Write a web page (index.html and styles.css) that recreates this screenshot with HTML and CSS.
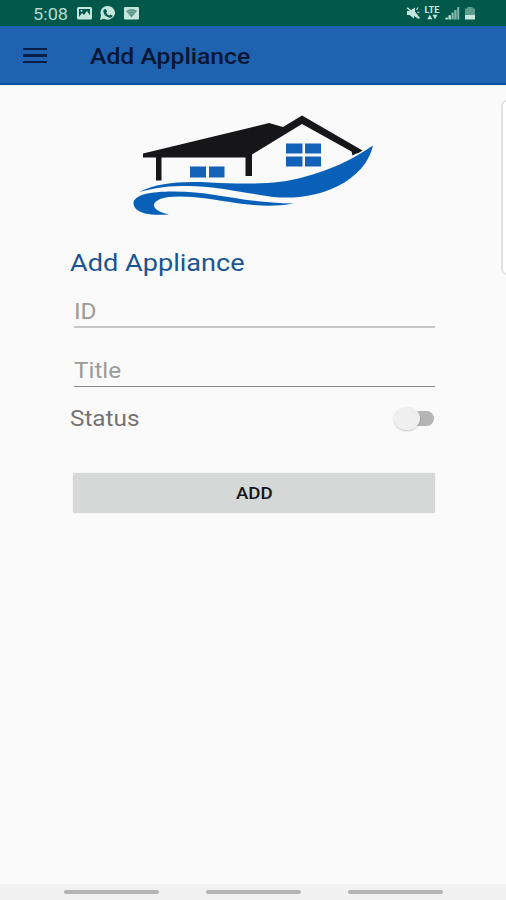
FILE: index.html
```html
<!DOCTYPE html>
<html lang="en">
<head>
    <meta charset="UTF-8">
    <meta name="viewport" content="width=device-width, initial-scale=1.0">
    <title>Add Appliance</title>
    <link rel="stylesheet" href="styles.css">
</head>
<body>
    <div class="status-bar">
        <span class="time wide">5:08</span>
        <svg class="status-left" width="64" height="16" viewBox="76 6 64 16">
            <path fill="#c5e6dd" fill-rule="evenodd" d="M78.500 7h12q1.500 0 1.500 1.500v9.500q0 1.500-1.500 1.500h-12q-1.500 0-1.500-1.500v-9.500q0-1.500 1.500-1.500zM79 9v8.500h11V9z"/>
            <path fill="#c5e6dd" d="M79 17l3-4 2 2 3-4 3.500 5v2H79z"/>
            <circle cx="81.500" cy="10.800" r="1" fill="#c5e6dd"/>
            <path fill="#c5e6dd" d="M100 20l1-4.500a7.300 6.800 0 1 1 3 3.200z"/>
            <path fill="#075b4c" d="M104 9.500l1.800-.4 1.400 2.500-1 1.200q1 2 3 2.700l1.200-1.100 2.300 1.300q-.6 2.500-3.200 2.100-5.500-1.400-6.200-6.200-.1-1.300.7-2.100z"/>
            <rect x="124" y="7" width="15" height="12.500" rx="1" fill="#c5e6dd"/>
            <path fill="#5b9488" d="M126 11q5.500-4 11 0l-5.500 6.500z"/>
            <path fill="none" stroke="#9cc6bb" stroke-width=".6" d="M127.500 12.300q4-2.600 8 0M129.300 14.200q2.200-1.400 4.400 0"/>
        </svg>
        <svg class="status-right" width="72" height="16" viewBox="405 6 72 16">
            <path fill="#c5e6dd" d="M407 11h2.500l5.500-3.500v4l5 6.500-1.300 1-4.700-3v2.500L409.500 15H407zM406.500 8.200l1.200-1 5 4.300-1 1z"/>
            <path fill="none" stroke="#c5e6dd" stroke-width="1.200" d="M416.500 10l1.500-2.500M417.500 12.500l2-.5"/>
            <text class="lte" x="424.500" y="13" textLength="15" lengthAdjust="spacingAndGlyphs">LTE</text>
            <path fill="#c5e6dd" d="M427.300 19.200l2.500-4.500 2.500 4.500zM432.500 14.700h5l-2.500 4.500z"/>
            <path fill="#c5e6dd" d="M445.500 19.500v-2h2.300v2zM448.500 19.500v-4.300h2.300v4.300z"/>
            <path fill="#82b5a7" d="M451.500 19.500v-7h2.300v7zM454.300 19.500v-9.500h2.300v9.500zM457.200 19.500V7h2v12.500z"/>
            <path fill="#609c8d" d="M465 8.500h2.500V7h5v1.500h2.500V16h-10z"/>
            <path fill="#c5e6dd" d="M465 15h10v4.500h-10z"/>
        </svg>
    </div>

    <div class="app-bar">
        <div class="menu">
            <span></span>
            <span></span>
            <span></span>
        </div>
        <h1 class="title wide">Add Appliance</h1>
    </div>

    <div class="content">
        <svg class="logo" width="250" height="110" viewBox="128 110 250 110">
            <!-- roof and posts -->
            <path fill="#161517" d="M143 153.500L269 123l14 4 19-11.500 60.500 35-4 2.500-2 .5-4 2-1-4-49.500-27.500-50 30.500v21.500h-6.500V157.500h-84v23H156V157.500h-13z"/>
            <!-- windows -->
            <path fill="#1262b8" d="M190 166.500h16v11h-16zM209 166.500h15.500v11H209zM286 143.500h16.500v10H286zM305 143.500h16v10h-16zM286 156.500h16.500v10H286zM305 156.500h16v10h-16z"/>
            <!-- waves -->
            <path fill="#0960b8" d="M139 192C158 183 180 181 210 182.500C242 184 277 185 304 177C330 170 350 161 373 145.500C369 163 356 177 338 186C318 196 296 199 273 197C234 191 210 185 182 186C163 186 150 189.500 139 192z"/>
            <path fill="#0960b8" d="M169 214.500C149 216 135 213 133.500 204C133 196 146 192 169 191.500C213 190.500 240 203 294 203.500C273 207 257 206 236 203C211 199 188 195 169 197C151 199 147 210 169 214.500z"/>
        </svg>

        <h2 class="heading"><span class="wide">Add Appliance</span></h2>
        <div class="field"><span class="wide">ID</span></div>
        <div class="field field-title"><span class="wide">Title</span></div>
        <div class="status-row">
            <span class="wide">Status</span>
            <div class="switch"><div class="thumb"></div></div>
        </div>
        <button class="add-btn"><span class="wide">ADD</span></button>
    </div>

    <div class="side-panel"></div>

    <div class="nav-bar">
        <span></span>
        <span></span>
        <span></span>
    </div>
</body>
</html>
```
FILE: styles.css
```css
* {
    margin: 0;
    padding: 0;
    box-sizing: border-box;
}

body {
    display: flex;
    flex-direction: column;
    position: relative;
    height: 900px;
    overflow: hidden;
    font-family: Roboto, sans-serif;
    background-color: #fafafa;
}

/* text is set slightly wider than normal */
.wide {
    display: inline-block;
    transform: scaleX(1.13);
    transform-origin: left center;
    white-space: nowrap;
}

.status-bar {
    display: flex;
    align-items: center;
    height: 26px;
    padding: 1px 29px 0 33px;
    background-color: #00584a;
}

.time {
    width: 43px;
    font-size: 17px;
    line-height: 24px;
    color: #b5dcd2;
    transform: scaleX(1.07);
}

.status-right {
    margin-left: auto;
}

.lte {
    font-size: 9px;
    font-weight: 700;
    fill: #c5e6dd;
}

.app-bar {
    display: flex;
    align-items: center;
    height: 59px;
    padding: 2px 23px 0;
    background-color: #1f62b0;
    border-bottom: 2px solid #08519e;
}

.menu {
    display: flex;
    flex-direction: column;
    gap: 4px;
    width: 24px;
    margin-right: 43px;
}

.menu span {
    height: 2.5px;
    background-color: #091f47;
}

.title {
    padding-top: 2px;
    font-size: 21.5px;
    font-weight: 500;
    color: #061734;
    transform: scaleX(1.15);
}

.content {
    display: flex;
    flex-direction: column;
    flex: 1;
    padding: 25px 71px 0 70px;
}

.logo {
    margin-left: 58px;
}

.heading {
    margin-top: 27px;
    height: 32px;
    font-size: 24px;
    font-weight: 400;
    line-height: 32px;
    color: #1a5593;
}

.field {
    height: 49px;
    margin-left: 4px;
    padding-top: 18px;
    font-size: 21.5px;
    line-height: 30px;
    color: #9b9b9b;
    border-bottom: 2px solid #c6c6c6;
}

.field-title {
    height: 59px;
    padding-top: 28px;
    border-bottom: 1.5px solid #8c8c8c;
}

.status-row {
    display: flex;
    align-items: center;
    justify-content: space-between;
    height: 30px;
    margin-top: 16px;
    font-size: 21.5px;
    color: #737373;
}

.switch {
    display: flex;
    align-items: center;
    width: 36px;
    height: 15px;
    margin-right: 1px;
    border-radius: 8px;
    background-color: #b5b5b5;
}

.thumb {
    flex: none;
    width: 26px;
    height: 23px;
    margin-left: -4px;
    border-radius: 50%;
    background-color: #efefef;
    box-shadow: 0 1px 2px rgba(0, 0, 0, 0.2);
}

.add-btn {
    height: 40px;
    margin: 40px 0 0 3px;
    border: none;
    border-radius: 2px;
    font-family: inherit;
    font-size: 16.5px;
    font-weight: 500;
    color: #161616;
    background-color: #d6d7d7;
    box-shadow: 0 0 1px #c4c4c4;
}

.add-btn .wide {
    transform-origin: center;
}

.side-panel {
    position: absolute;
    top: 100px;
    right: -8px;
    width: 13px;
    height: 175px;
    border: 2px solid #e3e3e3;
    border-radius: 6px;
    background-color: #fff;
}

.nav-bar {
    display: flex;
    justify-content: center;
    gap: 47px;
    height: 16px;
    padding-top: 6px;
    background-color: #f1f1f1;
}

.nav-bar span {
    width: 95px;
    height: 4px;
    border-radius: 2px;
    background-color: #b4b4b4;
}
```
